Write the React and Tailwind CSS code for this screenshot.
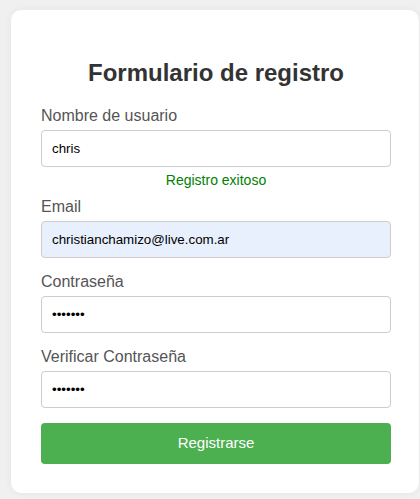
import React from "react";

const Field = ({ label, type = "text", value, className = "" }) => (
  <div>
    <label className="block text-[16px] leading-[18px] text-[#555] mb-[5px]">{label}</label>
    <input
      type={type}
      defaultValue={value}
      readOnly
      className={`block w-full h-[37px] px-[10px] border border-[#ccc] rounded-[4px] text-[13.333px] text-black outline-none ${className}`}
    />
  </div>
);

export default function App() {
  return (
    <div className="min-h-[499px] bg-[#f0f0f0] pt-[10px] pl-[11px] font-['Liberation_Sans',Arial,sans-serif]">
      <div className="w-[408px] bg-white rounded-[10px] pl-[30px] pr-[28px] pt-[49px] pb-[29px] shadow-[0_0_8px_rgba(0,0,0,0.05)]">
        <h2 className="text-center text-[24px] leading-[28px] font-bold text-[#333]">Formulario de registro</h2>
        <div className="mt-[20px]">
          <Field label="Nombre de usuario" value="chris" className="bg-white" />
          <p className="mt-[5px] text-center text-[14px] leading-[16px] text-[#008000]">Registro exitoso</p>
        </div>
        <div className="mt-[10px]">
          <Field label="Email" type="email" value="christianchamizo@live.com.ar" className="bg-[#e8f0fe]" />
        </div>
        <div className="mt-[15px]">
          <Field label="Contraseña" type="password" value="1234567" className="bg-white" />
        </div>
        <div className="mt-[15px]">
          <Field label="Verificar Contraseña" type="password" value="1234567" className="bg-white" />
        </div>
        <button className="mt-[15px] w-full h-[41px] bg-[#4caf50] text-white text-[15px] rounded-[4px]">
          Registrarse
        </button>
      </div>
    </div>
  );
}
